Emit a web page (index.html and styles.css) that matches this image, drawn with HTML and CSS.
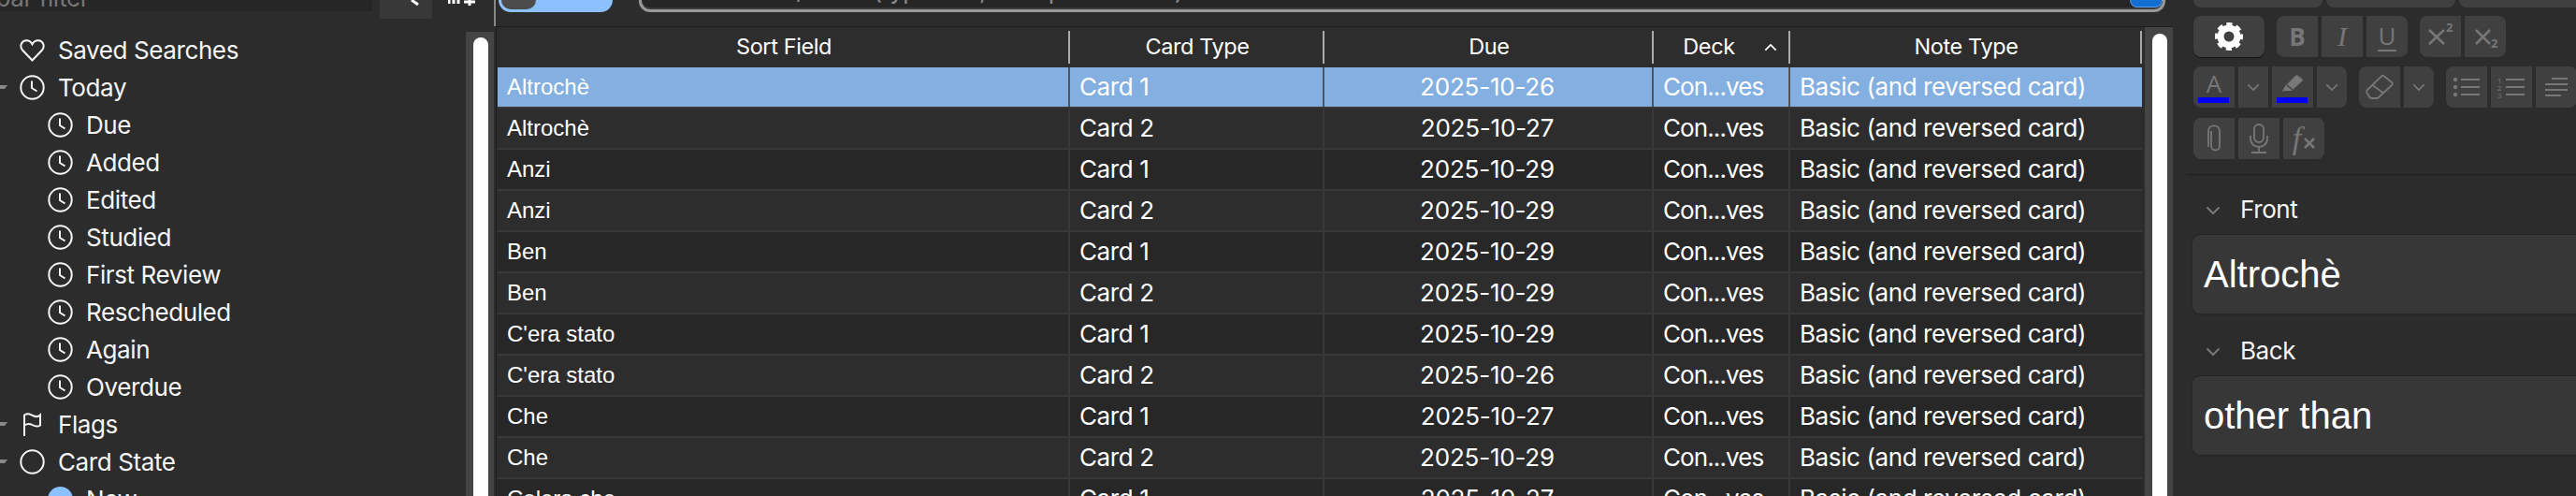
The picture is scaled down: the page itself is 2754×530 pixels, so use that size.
FILE: index.html
```html
<!DOCTYPE html>
<html lang="en">
<head>
    <meta charset="UTF-8">
    <title>Browse</title>
    <link rel="stylesheet" href="styles.css">
</head>
<body>
<svg class="defs" width="0" height="0">
    <symbol id="clock" viewBox="0 0 27 27">
        <circle cx="13.5" cy="13.5" r="12.2" fill="none" stroke="currentColor" stroke-width="2"/>
        <path d="M13 6.5V14l5.5 3.5" fill="none" stroke="currentColor" stroke-width="2"/>
    </symbol>
    <symbol id="chev" viewBox="0 0 16 10">
        <path d="M1.5 1.5 8 8l6.5-6.5" fill="none" stroke="currentColor" stroke-width="2"/>
    </symbol>
</svg>
<div class="app">
    <div class="sidebar">
        <div class="sideTop">
            <div class="sideFilter"><span>Sidebar filter</span></div>
            <div class="sideSearch">
                <svg width="12" height="6" viewBox="0 0 12 6"><path d="M1 0l7 5" stroke="#fff" stroke-width="3"/></svg>
            </div>
            <svg class="sideAdd" width="30" height="6" viewBox="0 0 30 6"><path d="M1 0v4M6 0v4M11 0v4M23 0v6M17 2h12" stroke="#fff" stroke-width="3"/></svg>
        </div>
        <div class="sideBody">
            <ul class="tree">
                <li class="row">
                    <svg class="ico" viewBox="0 0 27 27"><path d="M13.5 24.5 3 13.5C-.5 9 2 3.5 7 3.2c3-.2 5.2 1.500 6.500 4 1.300-2.500 3.500-4.200 6.500-4 5 .3 7.500 5.800 4 10.300z" fill="none" stroke="currentColor" stroke-width="2"/></svg>
                    Saved Searches
                </li>
                <li class="row arrow"><svg class="ico"><use href="#clock"/></svg>Today</li>
                <li class="row sub"><svg class="ico"><use href="#clock"/></svg>Due</li>
                <li class="row sub"><svg class="ico"><use href="#clock"/></svg>Added</li>
                <li class="row sub"><svg class="ico"><use href="#clock"/></svg>Edited</li>
                <li class="row sub"><svg class="ico"><use href="#clock"/></svg>Studied</li>
                <li class="row sub"><svg class="ico"><use href="#clock"/></svg>First Review</li>
                <li class="row sub"><svg class="ico"><use href="#clock"/></svg>Rescheduled</li>
                <li class="row sub"><svg class="ico"><use href="#clock"/></svg>Again</li>
                <li class="row sub"><svg class="ico"><use href="#clock"/></svg>Overdue</li>
                <li class="row arrow">
                    <svg class="ico" viewBox="0 0 27 27"><path d="M5 26V3.500c4-2.500 6-1 9 .5s6 1.500 8-.5v11c-3 2-6 1-8.500-.5S8 12.500 5 14.500" fill="none" stroke="currentColor" stroke-width="2"/></svg>
                    Flags
                </li>
                <li class="row arrow">
                    <svg class="ico" viewBox="0 0 27 27"><circle cx="13.500" cy="13.500" r="12.200" fill="none" stroke="currentColor" stroke-width="2"/></svg>
                    Card State
                </li>
                <li class="row sub">
                    <svg class="ico" viewBox="0 0 27 27"><circle cx="13.500" cy="13.500" r="13.500" fill="#8cc0ff"/></svg>
                    New
                </li>
            </ul>
            <div class="track"><div class="thumb"></div></div>
        </div>
    </div>

    <div class="main">
        <div class="mainTop">
            <div class="pill"><div class="knob"></div></div>
            <div class="search">
                <div class="searchText">Search cards/notes (type text, then press Enter)</div>
                <div class="searchBtn"></div>
            </div>
        </div>
        <div class="tableWrap">
            <div class="table">
                <div class="line head">
                    <div class="cell">Sort Field</div>
                    <div class="cell">Card Type</div>
                    <div class="cell">Due</div>
                    <div class="cell deckHead">Deck<svg class="sortUp" width="14" height="9"><use href="#chev"/></svg></div>
                    <div class="cell">Note Type</div>
                </div>
                <div class="line selected"><div class="cell sortf">Altrochè</div><div class="cell">Card 1</div><div class="cell date">2025-10-26</div><div class="cell deck">Con...ves</div><div class="cell">Basic (and reversed card)</div></div>
                <div class="line"><div class="cell sortf">Altrochè</div><div class="cell">Card 2</div><div class="cell date">2025-10-27</div><div class="cell deck">Con...ves</div><div class="cell">Basic (and reversed card)</div></div>
                <div class="line"><div class="cell sortf">Anzi</div><div class="cell">Card 1</div><div class="cell date">2025-10-29</div><div class="cell deck">Con...ves</div><div class="cell">Basic (and reversed card)</div></div>
                <div class="line"><div class="cell sortf">Anzi</div><div class="cell">Card 2</div><div class="cell date">2025-10-29</div><div class="cell deck">Con...ves</div><div class="cell">Basic (and reversed card)</div></div>
                <div class="line"><div class="cell sortf">Ben</div><div class="cell">Card 1</div><div class="cell date">2025-10-29</div><div class="cell deck">Con...ves</div><div class="cell">Basic (and reversed card)</div></div>
                <div class="line"><div class="cell sortf">Ben</div><div class="cell">Card 2</div><div class="cell date">2025-10-29</div><div class="cell deck">Con...ves</div><div class="cell">Basic (and reversed card)</div></div>
                <div class="line"><div class="cell sortf">C'era stato</div><div class="cell">Card 1</div><div class="cell date">2025-10-29</div><div class="cell deck">Con...ves</div><div class="cell">Basic (and reversed card)</div></div>
                <div class="line"><div class="cell sortf">C'era stato</div><div class="cell">Card 2</div><div class="cell date">2025-10-26</div><div class="cell deck">Con...ves</div><div class="cell">Basic (and reversed card)</div></div>
                <div class="line"><div class="cell sortf">Che</div><div class="cell">Card 1</div><div class="cell date">2025-10-27</div><div class="cell deck">Con...ves</div><div class="cell">Basic (and reversed card)</div></div>
                <div class="line"><div class="cell sortf">Che</div><div class="cell">Card 2</div><div class="cell date">2025-10-29</div><div class="cell deck">Con...ves</div><div class="cell">Basic (and reversed card)</div></div>
                <div class="line"><div class="cell sortf">Colera che</div><div class="cell">Card 1</div><div class="cell date">2025-10-27</div><div class="cell deck">Con...ves</div><div class="cell">Basic (and reversed card)</div></div>
            </div>
            <div class="track tableTrack"><div class="thumb"></div></div>
        </div>
    </div>

    <div class="editor">
        <div class="topBtns">
            <div class="topBtn"></div>
            <div class="topBtn"></div>
            <div class="topBtn"></div>
        </div>
        <div class="tools">
            <div class="btnGroup">
                <div class="btn wide gear">
                    <svg width="30" height="30" viewBox="0 0 30 30">
                        <circle cx="15" cy="15" r="9" fill="none" stroke="#fff" stroke-width="7"/>
                        <circle cx="15" cy="15" r="12.500" fill="none" stroke="#fff" stroke-width="5" stroke-dasharray="5.800 4.020" stroke-dashoffset="2.900"/>
                    </svg>
                </div>
            </div>
            <div class="btnGroup">
                <div class="btn"><span class="glyphB">B</span></div>
                <div class="btn"><span class="glyphI">I</span></div>
                <div class="btn"><span class="glyphU">U</span></div>
            </div>
            <div class="btnGroup">
                <div class="btn">
                    <svg width="44" height="44" viewBox="0 0 44 44"><path d="M10 15l16 15M26 15 10 30" stroke="#777" stroke-width="2.500"/><text x="28" y="17" class="svgNum">2</text></svg>
                </div>
                <div class="btn">
                    <svg width="44" height="44" viewBox="0 0 44 44"><path d="M12 15l15 15M27 15 12 30" stroke="#777" stroke-width="2.500"/><text x="28" y="34" class="svgNum">2</text></svg>
                </div>
            </div>
        </div>
        <div class="tools">
            <div class="btnGroup">
                <div class="btn colorBtn"><span class="glyphA">A</span><i class="colorBar"></i></div>
                <div class="btn narrow"><svg class="chev" width="14" height="9"><use href="#chev"/></svg></div>
                <div class="btn colorBtn">
                    <svg width="24" height="22" viewBox="0 0 24 22"><path d="M1 20l3-6L15 3c1-1 2-1 3 0l4 3c1 1 1 2 0 3L11 19H4z" fill="#777"/><path d="M6 13l6 5" stroke="#404040" stroke-width="1.500"/></svg>
                    <i class="colorBar"></i>
                </div>
                <div class="btn narrow"><svg class="chev" width="14" height="9"><use href="#chev"/></svg></div>
            </div>
            <div class="btnGroup">
                <div class="btn">
                    <svg width="32" height="28" viewBox="0 0 32 28" fill="none" stroke="#777" stroke-width="1.800"><path d="M3 17 18 2.500c1-1 2-1 3 0l8 6.500c1 1 1 2 0 3L14 26H8c-1 0-2-.5-2.500-1L3 21c-1-1-1-3 0-4zM8.500 12 19.500 20"/></svg>
                </div>
                <div class="btn narrow"><svg class="chev" width="14" height="9"><use href="#chev"/></svg></div>
            </div>
            <div class="btnGroup">
                <div class="btn">
                    <svg width="30" height="22" viewBox="0 0 30 22" stroke="#777" stroke-width="1.800"><path d="M9 3h20M9 11h20M9 19h20"/><circle cx="3" cy="3" r="2.200" fill="#777" stroke="none"/><circle cx="3" cy="11" r="2.200" fill="#777" stroke="none"/><circle cx="3" cy="19" r="2.200" fill="#777" stroke="none"/></svg>
                </div>
                <div class="btn">
                    <svg width="30" height="24" viewBox="0 0 30 24" stroke="#777" stroke-width="1.800"><path d="M9 4h20M9 12h20M9 20h20"/><text x="0" y="8" class="svgTiny">1</text><text x="0" y="16" class="svgTiny">2</text><text x="0" y="24" class="svgTiny">3</text></svg>
                </div>
                <div class="btn">
                    <svg width="26" height="22" viewBox="0 0 26 22" stroke="#777" stroke-width="1.800"><path d="M8 2h17M1 8h24M1 14h24M1 20h17"/></svg>
                </div>
            </div>
        </div>
        <div class="tools">
            <div class="btnGroup">
                <div class="btn">
                    <svg width="16" height="30" viewBox="0 0 16 30" fill="none" stroke="#777" stroke-width="1.800"><path d="M5 7v16c0 6 9 6 9 0V7C14-.500 2-.500 2 7v17"/></svg>
                </div>
                <div class="btn">
                    <svg width="22" height="32" viewBox="0 0 22 32" fill="none" stroke="#777" stroke-width="1.800"><rect x="6" y="1" width="10" height="19" rx="5"/><path d="M2 13v3c0 12 18 12 18 0v-3M11 25v6M3 31h16"/></svg>
                </div>
                <div class="btn"><span class="glyphF">f</span><svg class="fxX" width="12" height="12" viewBox="0 0 12 12"><path d="M1 1l10 10M11 1 1 11" stroke="#777" stroke-width="2.500"/></svg></div>
            </div>
        </div>
        <div class="divider"></div>
        <div class="fieldLabel"><svg class="chev" width="16" height="10"><use href="#chev"/></svg>Front</div>
        <div class="field">Altrochè</div>
        <div class="fieldLabel back"><svg class="chev" width="16" height="10"><use href="#chev"/></svg>Back</div>
        <div class="field">other than</div>
    </div>
</div>
</body>
</html>
```

FILE: styles.css
```css
*{
    padding: 0;
    margin: 0;
    box-sizing: border-box;
}
body{
    width: 2754px;
    height: 530px;
    overflow: hidden;
    background: #2c2c2c;
    color: #f6f6f6;
    font-family: Inter, "Noto Sans", sans-serif;
    font-size: 26px;
    letter-spacing: -0.4px;
}
.defs{
    position: absolute;
}
.app{
    display: flex;
    height: 530px;
    overflow: hidden;
}

/* sidebar */
.sidebar{
    width: 528px;
    flex-shrink: 0;
    display: flex;
    flex-direction: column;
}
.sideTop{
    height: 34px;
    display: flex;
    align-items: flex-start;
    flex-shrink: 0;
}
.sideFilter{
    width: 398px;
    height: 12px;
    background: #262626;
    display: flex;
    align-items: flex-end;
    overflow: hidden;
    color: #777;
    line-height: 26px;
}
.sideFilter span{
    margin-left: -57px;
    margin-bottom: 1px;
    white-space: nowrap;
}
.sideSearch{
    width: 56px;
    height: 20px;
    margin-left: 8px;
    padding-left: 33px;
    background: #383838;
}
.sideSearch svg{
    display: block;
}
.sideAdd{
    margin-left: 17px;
}
.sideBody{
    flex: 1;
    display: flex;
    min-height: 0;
}
.tree{
    flex: 1;
    list-style: none;
    overflow: hidden;
}
.row{
    position: relative;
    height: 40px;
    display: flex;
    align-items: center;
    gap: 14px;
    padding-left: 21px;
    padding-bottom: 1px;
    white-space: nowrap;
}
.row.sub{
    padding-left: 51px;
}
.row.arrow::before{
    content: "";
    position: absolute;
    left: -4px;
    top: 17px;
    border-left: 3px solid transparent;
    border-right: 3px solid transparent;
    border-top: 4px solid #888;
    width: 6px;
}
.ico{
    width: 27px;
    height: 27px;
    flex-shrink: 0;
}
.track{
    width: 30px;
    flex-shrink: 0;
    background: #444;
    padding: 6px 6px 0 8px;
    overflow: hidden;
}
.thumb{
    height: 600px;
    background: #fff;
    border-radius: 8px;
}

/* middle part */
.main{
    width: 1795px;
    flex-shrink: 0;
    display: flex;
    flex-direction: column;
    position: relative;
}
.mainTop{
    height: 28px;
    flex-shrink: 0;
    display: flex;
    align-items: flex-start;
    border-left: 2px solid #888;
    padding-left: 3px;
}
.pill{
    width: 122px;
    height: 13px;
    background: #8cc0ff;
    border-radius: 0 0 16px 16px;
    padding-left: 3px;
    overflow: hidden;
}
.knob{
    width: 37px;
    height: 10px;
    background: #4b4b4b;
    border-radius: 0 0 18px 18px;
}
.search{
    width: 1632px;
    height: 13px;
    margin-left: 28px;
    border: 3px solid #999;
    border-top: 0;
    border-radius: 0 0 12px 12px;
    background: #262626;
    box-shadow: inset 0 -2px 0 #3b3b3b;
    display: flex;
    align-items: flex-start;
    overflow: hidden;
}
.searchText{
    margin: -23px 0 0 8px;
    line-height: 26px;
    color: #8a8a8a;
    white-space: nowrap;
}
.searchBtn{
    width: 35px;
    height: 8px;
    margin-left: auto;
    background: #136ed2;
    border: 1px solid #5a9be6;
    border-top: 0;
    border-radius: 0 0 8px 8px;
}
.tableWrap{
    flex: 1;
    min-height: 0;
    margin-left: 2px;
    display: flex;
    border-top: 1px solid #1d1d1d;
    border-left: 1px solid #1d1d1d;
}
.table{
    width: 1762px;
    padding-left: 1px;
    padding-right: 3px;
    overflow: hidden;
    color: #fff;
}
.line{
    display: grid;
    grid-template-columns: 612px 272px 352px 146px 376px;
    height: 44px;
    line-height: 42px;
    border-bottom: 2px solid #383838;
}
.line:nth-child(odd){
    background: #2d2d2d;
}
.line:nth-child(even){
    background: #272727;
}
.line.head{
    height: 43px;
    line-height: 41px;
    background: #2d2d2d;
    border-bottom: 0;
    font-size: 23.5px;
    text-align: center;
}
.line.selected{
    background: #84afe1;
    color: #fff;
}
.cell{
    padding-left: 10px;
    border-right: 2px solid #383838;
    white-space: nowrap;
    overflow: hidden;
}
.cell:last-child{
    border-right: 0;
}
.line.selected .cell{
    border-right-color: #52565c;
}
.head .cell{
    position: relative;
    padding-left: 0;
    border-right: 0;
}
.head .cell::after{
    content: "";
    position: absolute;
    right: 0;
    top: 4px;
    height: 35px;
    width: 2px;
    background: #aaa;
}
.deckHead{
    padding-right: 28px;
}
.sortUp{
    position: absolute;
    right: 14px;
    top: 17px;
    transform: rotate(180deg);
    color: #fff;
}
.sortf{
    font-family: "Liberation Sans", Arial, sans-serif;
    font-size: 24px;
    letter-spacing: 0;
}
.date{
    text-align: center;
    padding-left: 0;
    padding-right: 2px;
    letter-spacing: -0.2px;
}
.deck{
    letter-spacing: -0.9px;
}
.tableTrack{
    padding-top: 7px;
}

/* editor */
.editor{
    width: 431px;
    flex-shrink: 0;
    overflow: hidden;
    padding-left: 21px;
}
.topBtns{
    display: flex;
    gap: 4px;
    height: 8px;
    margin-left: 1px;
}
.topBtn{
    width: 138px;
    flex-shrink: 0;
    background: #404040;
    border-radius: 0 0 8px 8px;
}
.tools{
    display: flex;
    gap: 13px;
    height: 44px;
    margin: 9px 0 0 1px;
}
.tools + .tools{
    margin-top: 10px;
}
.tools + .tools + .tools{
    margin-top: 11px;
}
.btnGroup{
    display: flex;
    gap: 4px;
    flex-shrink: 0;
}
.btn{
    width: 44px;
    height: 44px;
    background: #404040;
    display: flex;
    align-items: center;
    justify-content: center;
    color: #777;
    letter-spacing: 0;
}
.btn:first-child{
    border-radius: 8px 0 0 8px;
}
.btn:last-child{
    border-radius: 0 8px 8px 0;
}
.btn.wide{
    width: 76px;
    border-radius: 8px;
    box-shadow: 0 1px 1px #151515;
}
.btn.narrow{
    width: 32px;
}
.colorBtn{
    position: relative;
    padding-bottom: 8px;
}
.colorBar{
    position: absolute;
    left: 5px;
    bottom: 5px;
    width: 33px;
    height: 6px;
    background: #0000f0;
}
.glyphB{
    font-family: "Open Sans", sans-serif;
    font-weight: 700;
    font-size: 26px;
}
.glyphI{
    font-family: "Liberation Serif", serif;
    font-style: italic;
    font-size: 30px;
}
.glyphU{
    font-family: "Open Sans", sans-serif;
    font-size: 26px;
    line-height: 30px;
    border-bottom: 2px solid #777;
    padding: 0 1px;
}
.glyphA{
    font-family: "Open Sans", sans-serif;
    font-size: 26px;
}
.glyphF{
    font-family: "Liberation Serif", serif;
    font-style: italic;
    font-size: 34px;
    margin-right: 3px;
}
.fxX{
    margin-top: 10px;
}
.svgNum{
    font-family: "Open Sans", sans-serif;
    font-weight: 700;
    font-size: 13px;
    fill: #777;
    stroke: none;
}
.svgTiny{
    font-family: "Open Sans", sans-serif;
    font-size: 8px;
    fill: #777;
    stroke: none;
}
.chev{
    color: #777;
}
.divider{
    height: 1px;
    margin: 16px 0 0 -6px;
    background: #1f1f1f;
}
.fieldLabel{
    height: 40px;
    margin-top: 16px;
    padding-left: 14px;
    display: flex;
    align-items: center;
    gap: 21px;
}
.fieldLabel.back{
    margin-top: 19px;
}
.fieldLabel .chev{
    margin-top: 4px;
}
.field{
    width: 430px;
    height: 84px;
    margin-top: 8px;
    padding-left: 12px;
    background: #373737;
    border-radius: 8px;
    box-shadow: 0 -1px 0 #232323, 0 1px 2px #232323;
    font-family: "Liberation Sans", Arial, sans-serif;
    font-size: 40px;
    line-height: 84px;
    letter-spacing: 0;
    color: #fff;
}
```
